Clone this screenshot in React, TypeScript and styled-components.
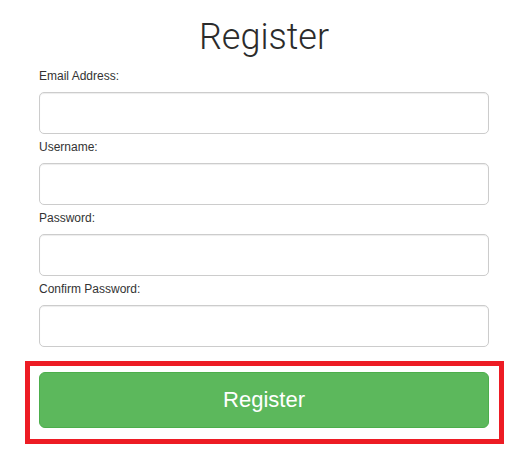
import React from 'react'
import styled, { createGlobalStyle } from 'styled-components'

const fields = [
  { id: 'email', label: 'Email Address:', type: 'email' },
  { id: 'username', label: 'Username:', type: 'text' },
  { id: 'password', label: 'Password:', type: 'password' },
  { id: 'confirm', label: 'Confirm Password:', type: 'password' },
]

const App = () => {
  return (
    <>
      <GlobalStyle />
      <Page>
        <Title>Register</Title>
        <Form onSubmit={(e) => e.preventDefault()}>
          {fields.map((field) => (
            <Field key={field.id}>
              <Label htmlFor={field.id}>{field.label}</Label>
              <Input id={field.id} type={field.type} />
            </Field>
          ))}
          <HighlightFrame>
            <SubmitButton type="submit">Register</SubmitButton>
          </HighlightFrame>
        </Form>
      </Page>
    </>
  )
}

const GlobalStyle = createGlobalStyle`
  html, body {
    margin: 0;
    background: #ffffff;
  }
  body {
    font-family: "Liberation Sans", Arial, sans-serif;
    color: #333333;
  }
`

const Page = styled.div`
  width: 450px;
  margin: 0 0 0 39px;
  padding-top: 17px;
`

const Title = styled.h1`
  margin: 0 0 11px;
  text-align: center;
  font-family: Roboto, "Liberation Sans", sans-serif;
  font-size: 36px;
  font-weight: 300;
  line-height: 40px;
  color: #2b2b2b;
`

const Form = styled.form`
  display: flex;
  flex-direction: column;
  gap: 5px;
`

const Field = styled.div`
  display: flex;
  flex-direction: column;
`

const Label = styled.label`
  font-size: 12px;
  line-height: 17px;
  margin-bottom: 7px;
  color: #333333;
`

const Input = styled.input`
  box-sizing: border-box;
  width: 450px;
  height: 42px;
  margin: 0;
  padding: 6px 12px;
  border: 1px solid #cccccc;
  border-radius: 5px;
  box-shadow: inset 0 1px 1px rgba(0, 0, 0, 0.075);
  font-size: 14px;
  outline: none;
`

const HighlightFrame = styled.div`
  margin: 9px -15px 0 -14px;
  padding: 6px 10px 11px 9px;
  border: 5px solid #ed1c24;
`

const SubmitButton = styled.button`
  display: block;
  width: 450px;
  height: 56px;
  border: 1px solid #4cae4c;
  border-radius: 6px;
  background: #5cb85c;
  color: #ffffff;
  font-family: "Liberation Sans", Arial, sans-serif;
  font-size: 22px;
  cursor: pointer;
`

export default App
